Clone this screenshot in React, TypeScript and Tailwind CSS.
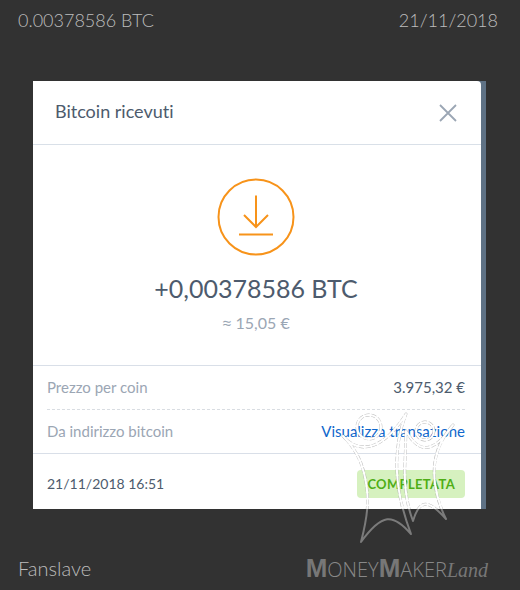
import React from "react";

const FIGURES = [
  "M343 436 C356 452 380 455 406 414 C399 432 396 452 397 472 C398 496 405 518 411 534 C393 513 382 513 361 542 C368 515 370 497 364 473 C361 460 354 447 343 436 Z",
  "M406 431 C418 452 432 456 453 425 C437 443 432 462 435 484 C437 498 441 509 446 519 C430 501 420 497 413 521 C406 503 404 482 405 462 Z",
];

const Figures: React.FC = () => (
  <>
    <circle cx="369" cy="427" r="12" />
    <circle cx="425" cy="431" r="9" />
    {FIGURES.map((d) => (
      <path key={d} d={d} />
    ))}
  </>
);

const Watermark: React.FC = () => (
  <svg
    className="pointer-events-none absolute -top-[99px] right-16 h-[136px] w-[116px]"
    viewBox="340 410 116 136"
    fill="none"
    strokeLinejoin="round"
    aria-hidden="true"
  >
    <clipPath id="light">
      <rect x="340" y="410" width="116" height="99" />
    </clipPath>
    <clipPath id="dark">
      <rect x="340" y="509" width="116" height="37" />
    </clipPath>
    <g clipPath="url(#light)">
      <g stroke="#a8a8a8" strokeWidth="2.8" strokeDasharray="5 1.5" strokeOpacity="0.8">
        <Figures />
      </g>
      <g stroke="#ffffff" strokeWidth="2">
        <Figures />
      </g>
    </g>
    <g clipPath="url(#dark)" stroke="#7b7b7b" strokeWidth="2">
      <Figures />
    </g>
  </svg>
);

const ReceivedIcon: React.FC = () => (
  <svg className="h-20 w-20" viewBox="0 0 80 80" fill="none" stroke="#f7931a" strokeWidth="2" aria-hidden="true">
    <circle cx="40" cy="40" r="37.5" />
    <path d="M40 18.5 V50 M28 38 L40 50 L52 38 M23 57.5 H57" />
  </svg>
);

const App: React.FC = () => {
  return (
    <div className="flex min-h-screen flex-col bg-[#323232] font-['Lato',sans-serif] [font-variant-ligatures:none]">
      <header className="flex h-[81px] justify-between pt-2 pr-[22px] pl-[18px] text-lg leading-6 font-light text-[#bdbdbd]">
        <span>0.00378586 BTC</span>
        <span>21/11/2018</span>
      </header>

      <main className="mr-[34px] ml-[33px] bg-[#5f7285] pr-[5px]">
        <section className="rounded-tr bg-white text-[#4d5b6d]">
          <div className="flex h-16 items-center justify-between border-b border-[#d9e0e8] px-[22px]">
            <h1 className="pb-1 text-lg">Bitcoin ricevuti</h1>
            <button type="button" aria-label="Chiudi" className="text-[#9ba6b4]">
              <svg className="h-[22px] w-[22px]" viewBox="0 0 22 22" stroke="currentColor" strokeWidth="1.8">
                <path d="M3 3 L19 19 M19 3 L3 19" />
              </svg>
            </button>
          </div>

          <div className="flex h-[221px] flex-col items-center border-b border-[#d9dfe8] pt-8 pr-0.5">
            <ReceivedIcon />
            <p className="mt-4 text-[25px] leading-[30px]">+0,00378586 BTC</p>
            <p className="mt-2 text-base leading-6 text-[#9ba6b4]">
              <span className="font-['Open_Sans',sans-serif]">≈</span> 15,05 €
            </p>
          </div>

          <dl className="border-b border-[#d9dfe8] pr-4 pl-[14px] text-[15px]">
            <div className="flex h-11 items-center justify-between border-b border-dashed border-[#d9dde2]">
              <dt className="text-[#9ba6b4]">Prezzo per coin</dt>
              <dd>3.975,32 €</dd>
            </div>
            <div className="flex h-[43px] items-center justify-between">
              <dt className="text-[#9ba6b4]">Da indirizzo bitcoin</dt>
              <dd>
                <a href="#transazione" className="text-[#0f67cc]">Visualizza transazione</a>
              </dd>
            </div>
          </dl>

          <div className="flex h-[55px] items-center justify-between pt-1 pr-4 pl-[14px] text-sm">
            <time dateTime="2018-11-21T16:51">21/11/2018 16:51</time>
            <span className="rounded bg-[#d6f1bf] px-[10px] py-1 text-[13px] leading-5 font-bold tracking-wide text-[#4fae16]">
              COMPLETATA
            </span>
          </div>
        </section>
      </main>

      <footer className="relative flex flex-1 items-end justify-between pr-8 pb-2 pl-[18px]">
        <Watermark />
        <span className="text-xl leading-7 font-light text-[#bdbdbd]">Fanslave</span>
        <div className="flex items-baseline font-['Open_Sans',sans-serif] text-xl leading-6 font-light text-[#888888]">
          <span className="font-['Liberation_Sans',sans-serif] text-[26px] font-bold text-[#777777]">M</span>
          <span>ONEY</span>
          <span className="font-['Liberation_Sans',sans-serif] text-[26px] font-bold text-[#777777]">M</span>
          <span>AKER</span>
          <span className="font-['Z003','Liberation_Serif',cursive] font-normal text-[#777777] italic">Land</span>
        </div>
      </footer>
    </div>
  );
};

export default App;
